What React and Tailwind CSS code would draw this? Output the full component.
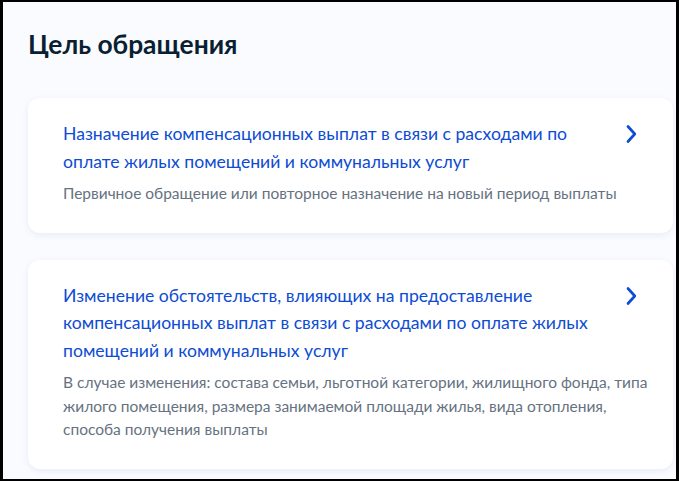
import React from "react";

const items = [
  {
    title:
      "Назначение компенсационных выплат в связи с расходами по оплате жилых помещений и коммунальных услуг",
    text: "Первичное обращение или повторное назначение на новый период выплаты",
  },
  {
    title:
      "Изменение обстоятельств, влияющих на предоставление компенсационных выплат в связи с расходами по оплате жилых помещений и коммунальных услуг",
    text: "В случае изменения: состава семьи, льготной категории, жилищного фонда, типа жилого помещения, размера занимаемой площади жилья, вида отопления, способа получения выплаты",
  },
];

const Chevron = () => (
  <svg width="12" height="20" viewBox="0 0 12 20" fill="none" className="shrink-0 mt-[4px] mr-[12px]">
    <path
      d="M3 2.5 L9.8 10 L3 17.5"
      stroke="#0d4cd3"
      strokeWidth="2.7"
      strokeLinecap="round"
      strokeLinejoin="round"
    />
  </svg>
);

const Card = ({ title, text }) => (
  <div className="bg-white rounded-[12px] shadow-[0_2px_6px_rgba(100,120,180,0.12)] pl-[35px] pr-[24px] pt-[22px] pb-[27px]">
    <div className="flex items-start justify-between">
      <div className="w-[545px] text-[17.6px] leading-[27.5px] text-[#0d4cd3]">{title}</div>
      <Chevron />
    </div>
    <div className="mt-[7px] text-[15.5px] leading-[23.5px] text-[#66727f]">{text}</div>
  </div>
);

export default function App() {
  return (
    <div
      className="w-[679px] h-[481px] bg-black border-l-[3px] border-t-2 border-r-[3px] border-b-2 border-black overflow-hidden"
      style={{ fontFamily: "Lato, 'Noto Sans', sans-serif" }}
    >
      <div className="h-full bg-[#fafbff] pl-[25px] pt-[26px] overflow-hidden">
        <h1 className="text-[26.4px] leading-[32px] font-bold text-[#0b1f33] mb-[38px]">
          Цель обращения
        </h1>
        <div className="w-[645px] flex flex-col gap-[27px]">
          {items.map((it, i) => (
            <Card key={i} title={it.title} text={it.text} />
          ))}
        </div>
      </div>
    </div>
  );
}
